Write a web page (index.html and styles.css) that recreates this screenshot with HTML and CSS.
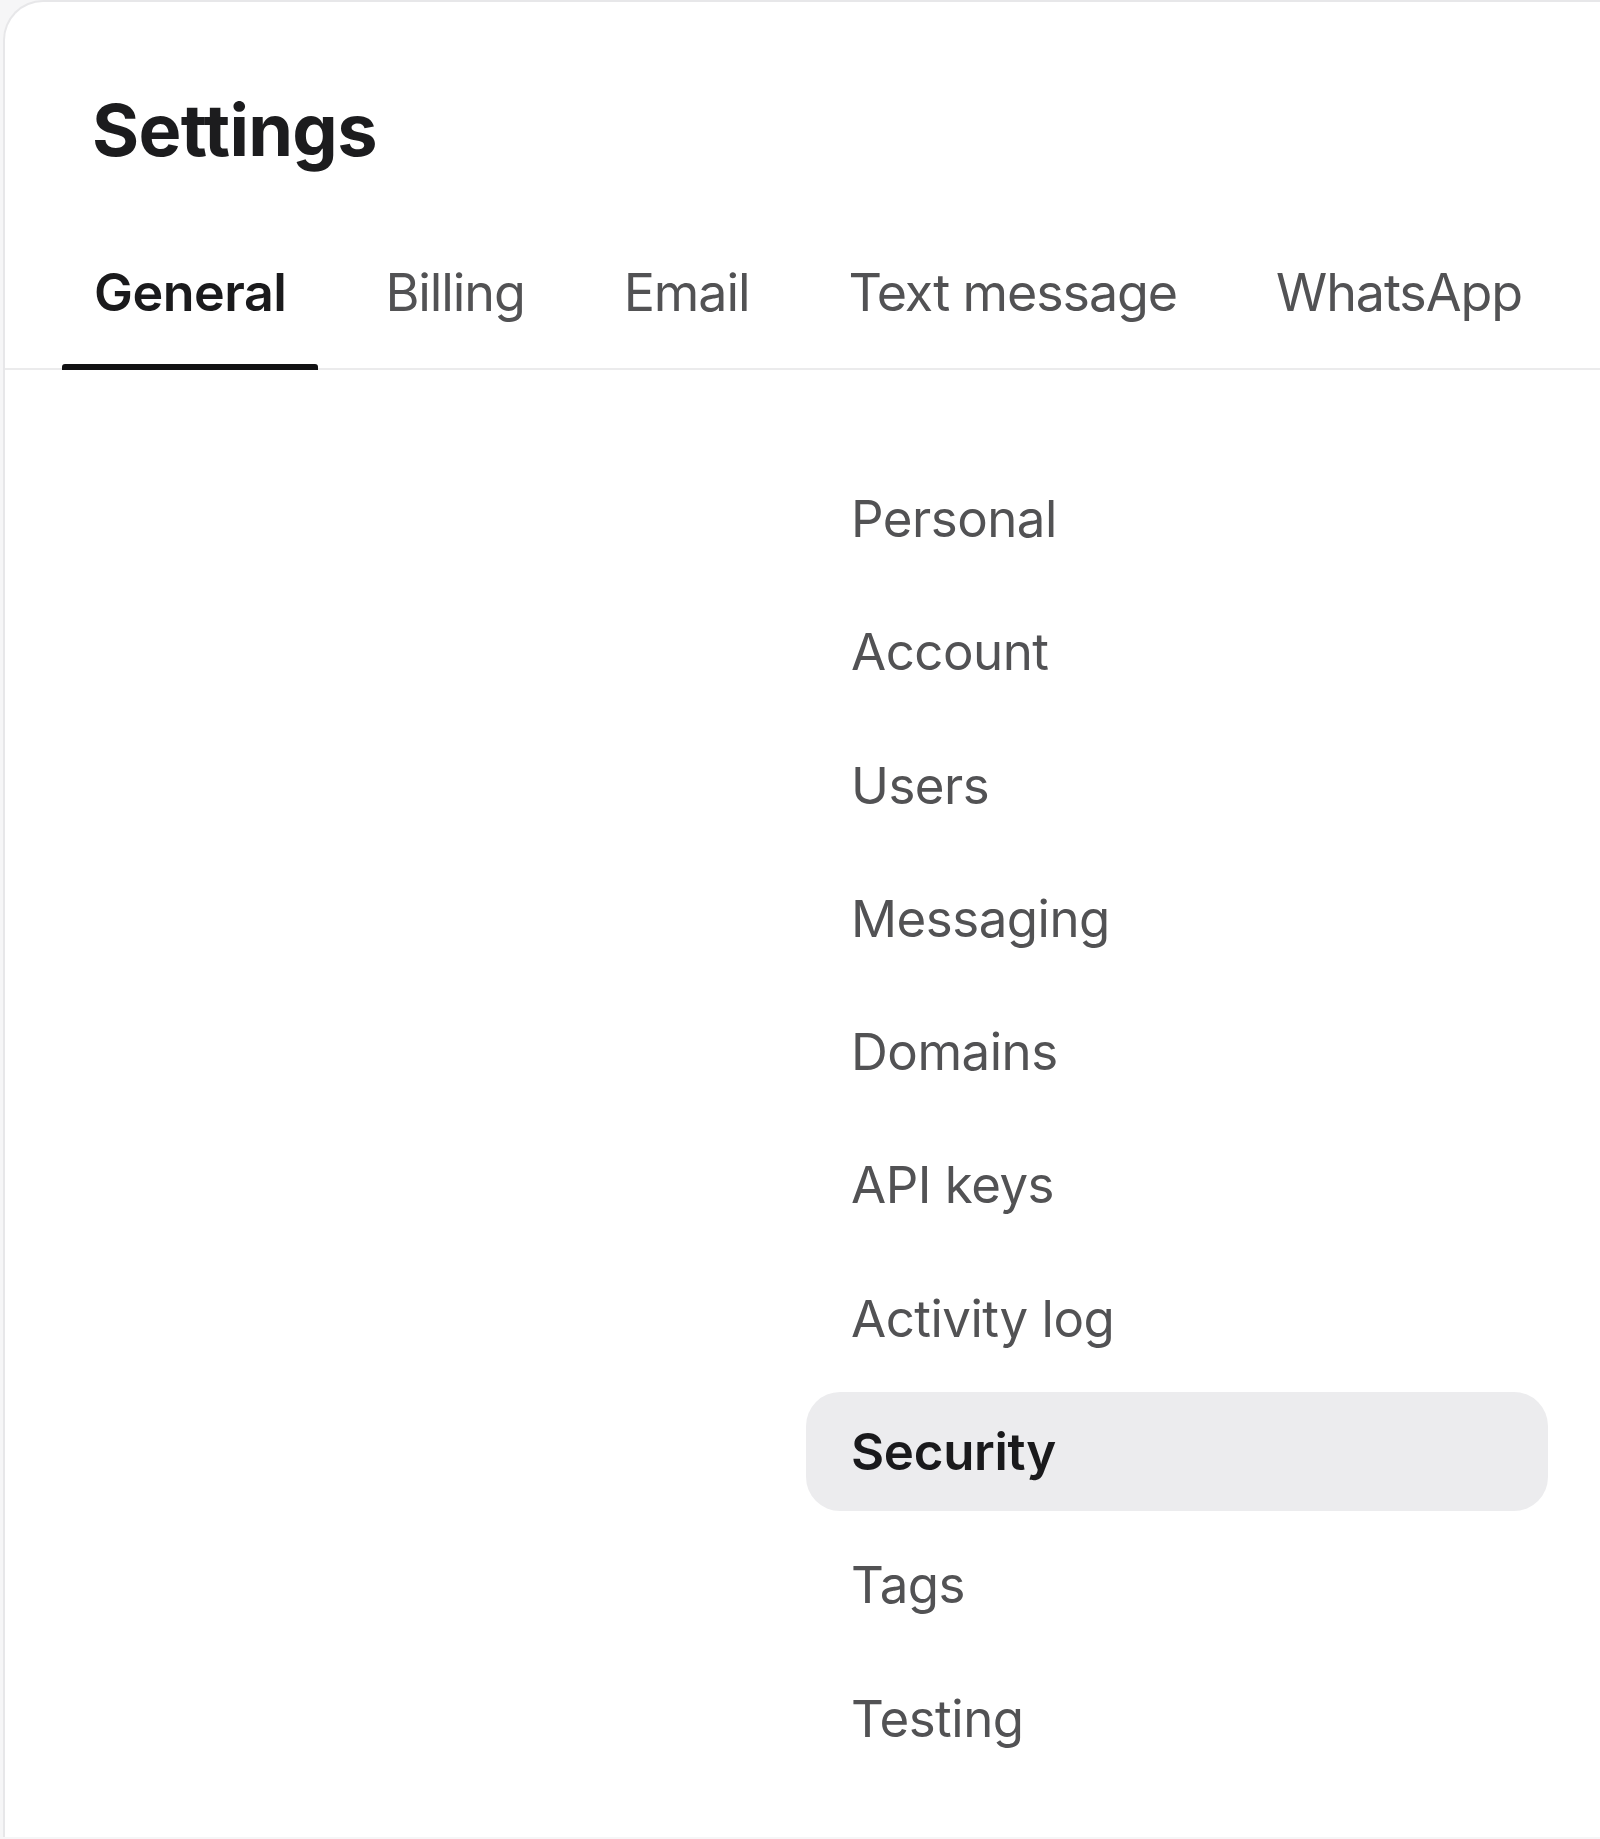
FILE: index.html
```html
<!DOCTYPE html>
<html lang="en">
<head>
<meta charset="utf-8">
<title>Settings</title>
<link rel="stylesheet" href="styles.css">
</head>
<body>
<div class="card">
  <h1 class="title">Settings</h1>
  <nav class="tabs">
    <a class="tab active">General</a>
    <a class="tab">Billing</a>
    <a class="tab">Email</a>
    <a class="tab">Text message</a>
    <a class="tab">WhatsApp</a>
  </nav>
  <div class="content">
    <div class="main"></div>
    <ul class="menu">
      <li class="item">Personal</li>
      <li class="item">Account</li>
      <li class="item">Users</li>
      <li class="item">Messaging</li>
      <li class="item">Domains</li>
      <li class="item">API keys</li>
      <li class="item">Activity log</li>
      <li class="item selected">Security</li>
      <li class="item">Tags</li>
      <li class="item">Testing</li>
    </ul>
  </div>
</div>
</body>
</html>
```
FILE: styles.css
```css
html, body {
  margin: 0;
  padding: 0;
}
body {
  background: #f6f6f7;
  font-family: Inter, "Noto Sans", "Liberation Sans", sans-serif;
  overflow: hidden;
}
.card {
  margin-left: 3px;
  background: #ffffff;
  border: 2px solid #e7e7e9;
  border-right: 0;
  border-bottom: 0;
  border-top-left-radius: 40px;
  min-height: 1837px;
  box-sizing: border-box;
  padding-top: 92px;
}
.title {
  margin: 0;
  padding-left: 87px;
  font-size: 72px;
  line-height: 72px;
  font-weight: 700;
  color: #1c1c1e;
  letter-spacing: -0.7px;
}
.tabs {
  display: flex;
  gap: 35px;
  margin-top: 101px;
  padding-left: 57px;
  border-bottom: 2px solid #ebebec;
}
.tab {
  position: relative;
  padding: 0 32px 49px;
  font-size: 52px;
  line-height: 52px;
  color: #525254;
  white-space: nowrap;
  letter-spacing: -1.1px;
}
.tab.active {
  color: #1a1a1c;
  font-weight: 600;
  letter-spacing: -0.5px;
}
.tab.active::after {
  content: "";
  position: absolute;
  left: 0;
  right: 0;
  bottom: -2px;
  height: 6px;
  border-radius: 3px 3px 0 0;
  background: #111113;
}
.content {
  display: grid;
  grid-template-columns: 1fr 742px;
  padding: 89px 52px 0 0;
}
.menu {
  list-style: none;
  margin: 0;
  padding: 0;
  display: flex;
  flex-direction: column;
  gap: 14.3px;
}
.item {
  display: flex;
  align-items: center;
  height: 119px;
  padding-left: 45px;
  border-radius: 34px;
  font-size: 51px;
  color: #525254;
  letter-spacing: -0.5px;
}
.item.selected {
  background: #ececee;
  color: #1a1a1c;
  font-weight: 600;
  letter-spacing: -0.3px;
}
```
